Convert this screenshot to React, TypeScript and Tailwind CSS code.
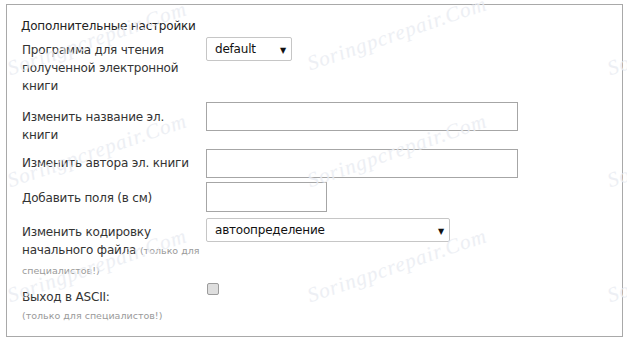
import React from "react";

const marks = [
  { x: 8, y: 60 },
  { x: 308, y: 55 },
  { x: 608, y: 60 },
  { x: 8, y: 172 },
  { x: 308, y: 172 },
  { x: 608, y: 172 },
  { x: 8, y: 287 },
  { x: 308, y: 287 },
  { x: 608, y: 287 },
];

function FakeSelect({ value, width }: { value: string; width: string }) {
  return (
    <div className={`relative h-[24px] ${width}`}>
      <select
        defaultValue={value}
        className="h-full w-full appearance-none rounded-[2px] border border-[#c6c6c6] bg-white pl-[8px] text-[12px] tracking-[-0.2px] text-[#111] outline-none"
      >
        <option value={value}>{value}</option>
      </select>
      <span className="pointer-events-none absolute right-[6px] top-[5px] text-[8px] text-[#111]">▼</span>
    </div>
  );
}

export default function App() {
  return (
    <div className="relative h-[344px] w-[627px] overflow-hidden bg-white font-['DejaVu_Sans','Verdana',sans-serif] text-[12px] leading-[18px] tracking-[-0.2px] text-[#333]">
      <div className="ml-[6px] mt-[4px] h-[333px] w-[617px] border border-[#a9a9a9] pl-[15px] pt-[12px]">
        <div className="ml-[-1px] text-[#222]">Дополнительные настройки</div>

        <div className="mt-[2px] flex h-[58px]">
          <label className="w-[184px] pt-[4px]">
            Программа для чтения
            <br />
            полученной электронной
            <br />
            книги
          </label>
          <FakeSelect value="default" width="w-[86px]" />
        </div>

        <div className="mt-[7px] flex h-[42px]">
          <label className="w-[184px] pt-[6px]">
            Изменить название эл.
            <br />
            книги
          </label>
          <input className="h-[29px] w-[312px] border border-[#a6a6a6] bg-white px-2 outline-none" />
        </div>

        <div className="mt-[5px] flex h-[30px]">
          <label className="w-[184px] pt-[5px]">Изменить автора эл. книги</label>
          <input className="h-[29px] w-[312px] border border-[#a6a6a6] bg-white px-2 outline-none" />
        </div>

        <div className="mt-[3px] flex h-[31px]">
          <label className="w-[184px] pt-[7px]">Добавить поля (в см)</label>
          <input className="h-[30px] w-[121px] border border-[#a6a6a6] bg-white px-2 outline-none" />
        </div>

        <div className="mt-[5px] flex h-[59px]">
          <label className="w-[184px] pt-[5px]">
            Изменить кодировку
            <br />
            начального файла{" "}
            <span className="text-[9.5px] leading-[20px] tracking-normal text-[#9a9a9a]">
              (только для
              <br />
              специалистов!)
            </span>
          </label>
          <FakeSelect value="автоопределение" width="w-[244px]" />
        </div>

        <div className="mt-[6px] flex">
          <label className="w-[184px] pt-[5px]">
            Выход в ASCII:
            <br />
            <span className="text-[9.5px] leading-[20px] tracking-normal text-[#9a9a9a]">(только для специалистов!)</span>
          </label>
          <input
            type="checkbox"
            className="ml-[1px] h-[12px] w-[12px] appearance-none rounded-[2px] border border-[#9c9c9c] bg-[#dedede]"
          />
        </div>
      </div>

      {marks.map((m, i) => (
        <span
          key={i}
          className="pointer-events-none absolute origin-left -rotate-[19deg] whitespace-nowrap font-['Liberation_Serif',serif] text-[21px] italic tracking-[1px] text-[#e9ecf2] opacity-80"
          style={{ left: m.x, top: m.y }}
        >
          Soringpcrepair.Com
        </span>
      ))}
    </div>
  );
}
